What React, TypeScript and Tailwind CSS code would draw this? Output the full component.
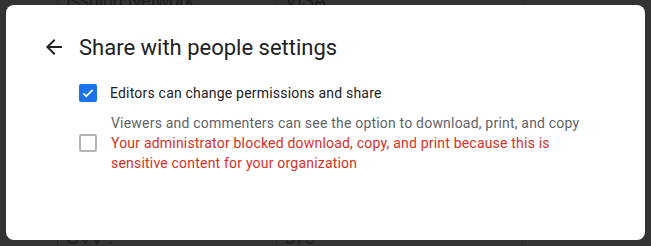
import React from 'react';

const BackArrow = () => (
  <svg width="24" height="24" viewBox="0 0 24 24" fill="#202124">
    <path d="M20 11H7.83l5.59-5.59L12 4l-8 8 8 8 1.41-1.41L7.83 13H20v-2z" />
  </svg>
);

const Checked = () => (
  <div className="flex h-[18px] w-[18px] shrink-0 items-center justify-center rounded-[2px] bg-[#1a73e8]">
    <svg width="14" height="14" viewBox="0 0 24 24" fill="none" stroke="white" strokeWidth="3">
      <path d="M4 12.5l5 5L20 6.5" />
    </svg>
  </div>
);

const Unchecked = () => (
  <div className="h-[18px] w-[18px] shrink-0 rounded-[2px] border-2 border-[#b5b5b5] bg-white" />
);

export default function App() {
  return (
    <div className="relative h-[246px] w-[651px] overflow-hidden bg-[#333333] font-['Roboto',sans-serif]">
      {/* page behind the modal */}
      <div className="flex h-full flex-col justify-between text-[18px] text-[#1c1c1c] font-['Liberation_Sans',sans-serif]">
        <div className="-mt-[11px] grid grid-cols-[57px_219px_246px_1fr]">
          <div />
          <div className="h-[40px] border-l border-[#2a2a2a] pl-[8px] leading-[24px]">Issuing Network :</div>
          <div className="border-l border-[#2a2a2a] pl-[8px] leading-[24px]">VISA</div>
          <div className="border-l border-[#2a2a2a]" />
        </div>
        <div className="-mb-[14px] grid grid-cols-[57px_219px_246px_1fr]">
          <div />
          <div className="h-[40px] border-l border-[#2a2a2a] pl-[8px] pt-[6px] leading-[24px]">CVV :</div>
          <div className="border-l border-[#2a2a2a] pl-[8px] pt-[6px] leading-[24px]">573</div>
          <div className="border-l border-[#2a2a2a]" />
        </div>
      </div>

      {/* dialog */}
      <div className="absolute left-[6px] top-[5px] h-[235px] w-[639px] rounded-[8px] bg-white">
        <div className="mt-[28px] flex h-[28px] items-center gap-[13px] pl-[36px]">
          <BackArrow />
          <span className="text-[22px] text-[#202124]">Share with people settings</span>
        </div>

        <div className="mt-[22px] flex flex-col gap-[10px] pl-[73px] text-[14px] leading-[20px] tracking-[0.2px]">
          <div className="flex h-[20px] items-center gap-[13px]">
            <Checked />
            <span className="text-[#202124]">Editors can change permissions and share</span>
          </div>
          <div className="flex items-center gap-[14px]">
            <Unchecked />
            <div>
              <div className="text-[#5f6368]">Viewers and commenters can see the option to download, print, and copy</div>
              <div className="text-[#d93025]">
                Your administrator blocked download, copy, and print because this is
                <br />
                sensitive content for your organization
              </div>
            </div>
          </div>
        </div>
      </div>
    </div>
  );
}
